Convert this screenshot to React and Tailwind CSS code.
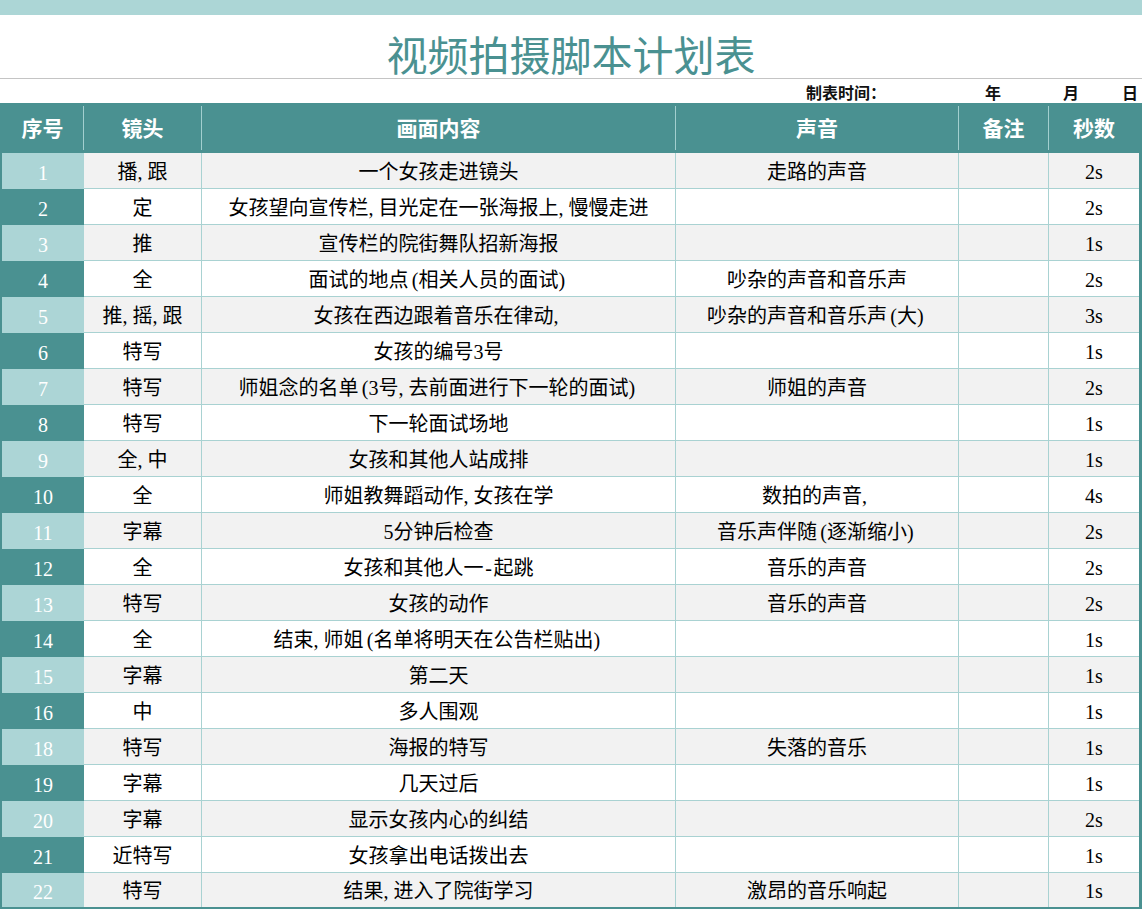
import React from "react";

const rows = [
  ["1", "播,跟", "一个女孩走进镜头", "走路的声音", "", "2s"],
  ["2", "定", "女孩望向宣传栏,目光定在一张海报上,慢慢走进", "", "", "2s"],
  ["3", "推", "宣传栏的院街舞队招新海报", "", "", "1s"],
  ["4", "全", "面试的地点(相关人员的面试)", "吵杂的声音和音乐声", "", "2s"],
  ["5", "推,摇,跟", "女孩在西边跟着音乐在律动,", "吵杂的声音和音乐声(大)", "", "3s"],
  ["6", "特写", "女孩的编号3号", "", "", "1s"],
  ["7", "特写", "师姐念的名单(3号,去前面进行下一轮的面试)", "师姐的声音", "", "2s"],
  ["8", "特写", "下一轮面试场地", "", "", "1s"],
  ["9", "全,中", "女孩和其他人站成排", "", "", "1s"],
  ["10", "全", "师姐教舞蹈动作,女孩在学", "数拍的声音,", "", "4s"],
  ["11", "字幕", "5分钟后检查", "音乐声伴随(逐渐缩小)", "", "2s"],
  ["12", "全", "女孩和其他人一-起跳", "音乐的声音", "", "2s"],
  ["13", "特写", "女孩的动作", "音乐的声音", "", "2s"],
  ["14", "全", "结束,师姐(名单将明天在公告栏贴出)", "", "", "1s"],
  ["15", "字幕", "第二天", "", "", "1s"],
  ["16", "中", "多人围观", "", "", "1s"],
  ["18", "特写", "海报的特写", "失落的音乐", "", "1s"],
  ["19", "字幕", "几天过后", "", "", "1s"],
  ["20", "字幕", "显示女孩内心的纠结", "", "", "2s"],
  ["21", "近特写", "女孩拿出电话拨出去", "", "", "1s"],
  ["22", "特写", "结果,进入了院街学习", "激昂的音乐响起", "", "1s"],
];

const font = { fontFamily: '"Liberation Serif", "Noto Sans CJK SC", serif' };

function T({ s }) {
  return s.split("").map((ch, i) => {
    if (ch === "(")
      return (
        <span key={i} className="inline-block w-[10px] text-right">
          {ch}
        </span>
      );
    if (ch === ")" || ch === ",")
      return (
        <span key={i} className="inline-block w-[10px] text-left">
          {ch}
        </span>
      );
    if (ch === "-")
      return (
        <span key={i} className="inline-block w-[10px] text-center">
          {ch}
        </span>
      );
    return <React.Fragment key={i}>{ch}</React.Fragment>;
  });
}

export default function App() {
  return (
    <div className="w-[1142px] h-[909px] overflow-hidden bg-white text-black" style={font}>
      <div className="h-[15px] bg-[#acd6d6]" />
      <div className="h-[64px] border-b border-[#c4c4c4] flex items-center justify-center pt-[22px]">
        <span className="text-[41px] leading-none text-[#4a9191]">视频拍摄脚本计划表</span>
      </div>
      <div className="h-[24px] overflow-hidden flex justify-end items-start pt-[7px] pr-[4px] text-[16px] leading-none font-bold text-[#111]">
        <span>制表时间：</span>
        <span className="ml-[99px]">年</span>
        <span className="ml-[62px]">月</span>
        <span className="ml-[43px]">日</span>
      </div>
      <div className="border-l-2 border-r-[3px] border-b-2 border-[#4a9191]">
        <div className="grid grid-cols-[82px_118px_474px_283px_90px_90px] h-[50px] bg-[#4a9191] py-[3px] text-white font-bold text-[21px] leading-none">
          {["序号", "镜头", "画面内容", "声音", "备注", "秒数"].map((h, i) => (
            <div
              key={h}
              className={
                "flex items-center justify-center pt-[3px] " +
                (i < 5 ? "border-r border-[#a3cfcf]" : "")
              }
            >
              {h}
            </div>
          ))}
        </div>
        {rows.map((r, idx) => {
          const light = idx % 2 === 0;
          const last = idx === rows.length - 1;
          return (
            <div
              key={r[0]}
              className={
                "grid grid-cols-[82px_118px_474px_283px_90px_90px] text-[20px] leading-none " +
                (last ? "h-[34px] " : "h-[36px] ") +
                (light ? "bg-[#f2f2f2]" : "bg-white")
              }
            >
              <div
                className={
                  "flex items-center justify-center pt-[3px] text-white " +
                  (light ? "bg-[#acd5d6]" : "bg-[#4a9191]")
                }
              >
                {r[0]}
              </div>
              {r.slice(1).map((c, i) => (
                <div
                  key={i}
                  className={
                    "flex items-center justify-center pt-[2px] border-[#a9d2d2] whitespace-nowrap " +
                    (i < 4 ? "border-r " : "") +
                    (last ? "" : "border-b")
                  }
                >
                  <span>
                    <T s={c} />
                  </span>
                </div>
              ))}
            </div>
          );
        })}
      </div>
    </div>
  );
}
